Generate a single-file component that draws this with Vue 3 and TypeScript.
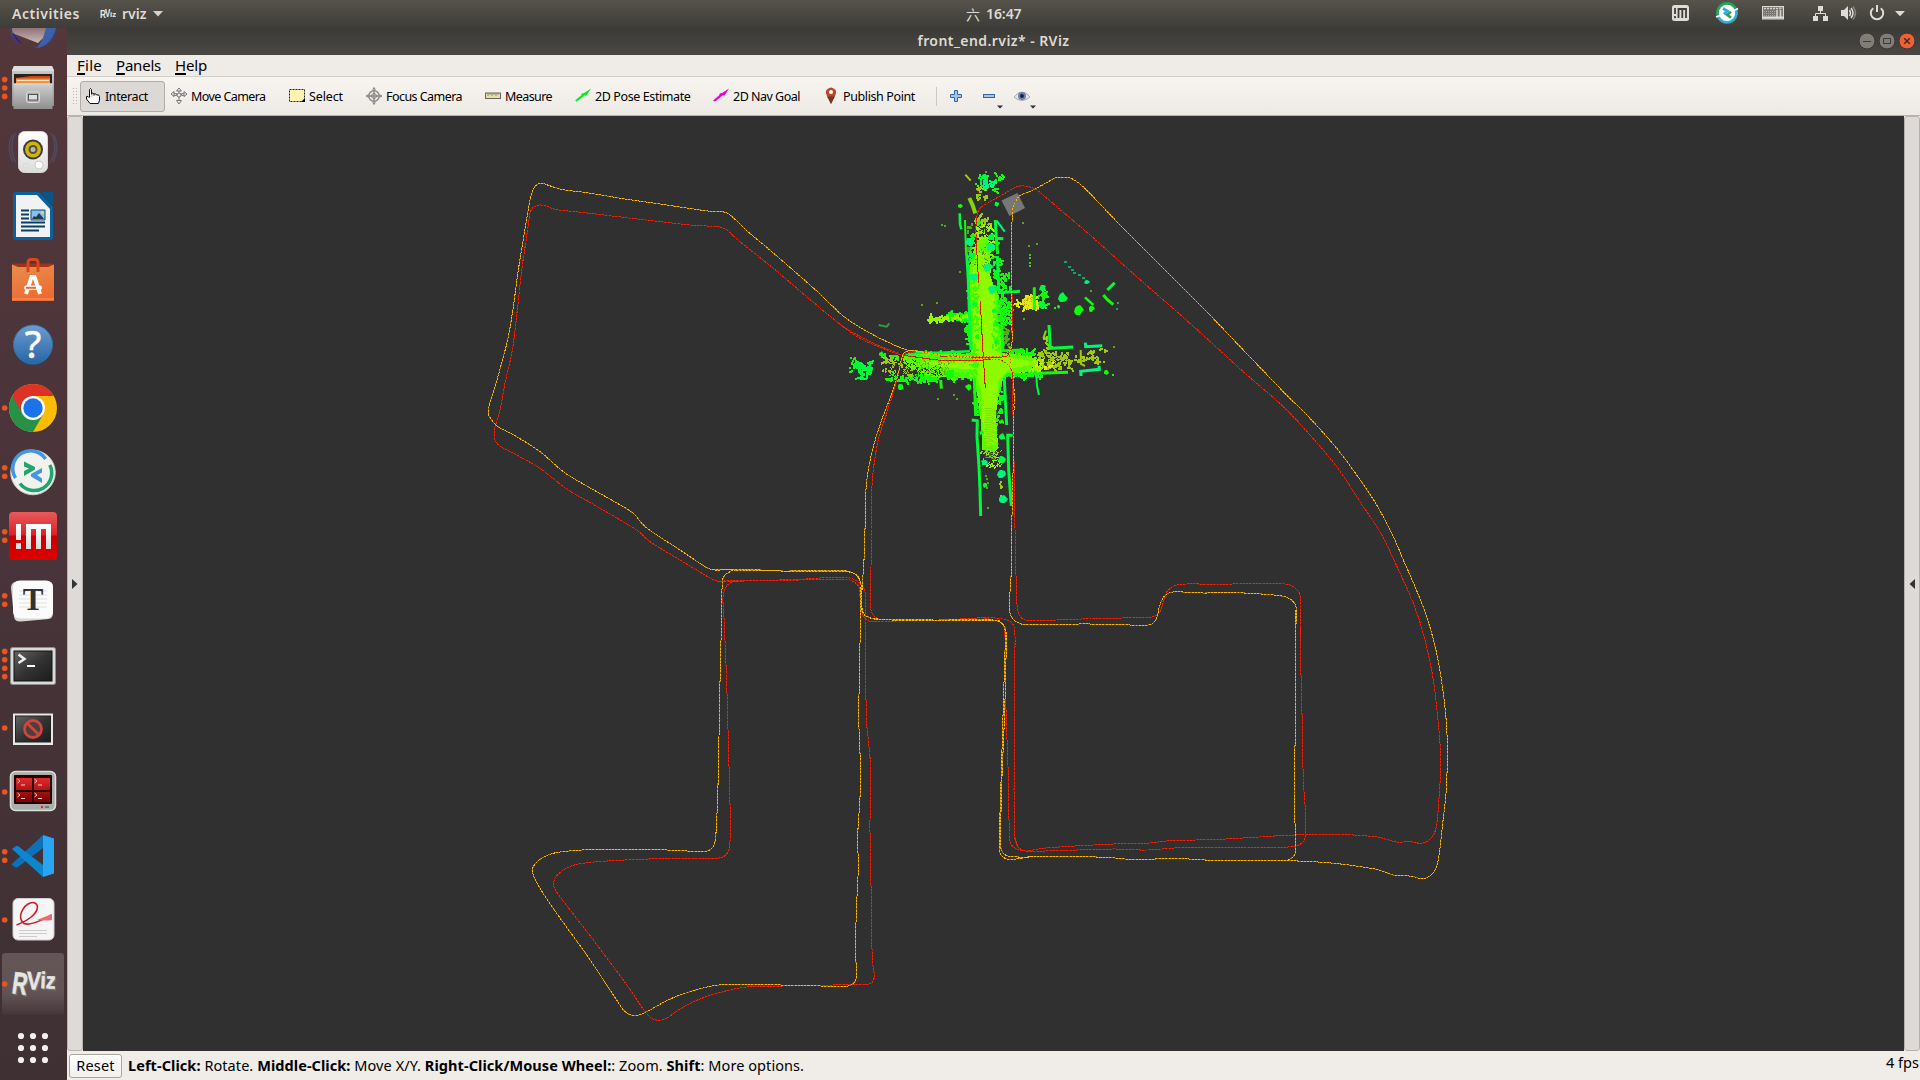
<script setup lang="ts">
import type { Directive } from 'vue'

/* Spreads a label over a fixed advance width. */
const vFit: Directive<HTMLElement, number> = {
  mounted(el, binding) {
    const natural = el.getBoundingClientRect().width
    const count = (el.textContent ?? '').length
    if (count > 0) el.style.letterSpacing = `${(binding.value - natural) / count}px`
  },
}

type Pt = [number, number]

interface Tool {
  id: string
  label: string
  slot: number
  text: number
}

const tools: Tool[] = [
  { id: 'interact', label: 'Interact', slot: 85, text: 43 },
  { id: 'move', label: 'Move Camera', slot: 118, text: 74.5 },
  { id: 'select', label: 'Select', slot: 77, text: 34 },
  { id: 'focus', label: 'Focus Camera', slot: 119, text: 76 },
  { id: 'measure', label: 'Measure', slot: 90, text: 47 },
  { id: 'pose', label: '2D Pose Estimate', slot: 138, text: 95.5 },
  { id: 'nav', label: '2D Nav Goal', slot: 110, text: 67 },
  { id: 'publish', label: 'Publish Point', slot: 114, text: 72 },
]

const menus = [
  { label: 'File', width: 25, slot: 39 },
  { label: 'Panels', width: 45, slot: 59 },
  { label: 'Help', width: 32, slot: 40 },
]

const apps = [
  { id: 'files', windows: 3 },
  { id: 'music', windows: 0 },
  { id: 'writer', windows: 0 },
  { id: 'software', windows: 0 },
  { id: 'help', windows: 0 },
  { id: 'chrome', windows: 1 },
  { id: 'remote', windows: 2 },
  { id: 'nomachine', windows: 2 },
  { id: 'typora', windows: 2 },
  { id: 'terminal', windows: 4 },
  { id: 'blocked', windows: 1 },
  { id: 'terminator', windows: 1 },
  { id: 'code', windows: 2 },
  { id: 'pdf', windows: 1 },
  { id: 'rviz', windows: 1 },
  { id: 'grid', windows: 0 },
]

function parse(ox: number, oy: number, s: string): Pt[] {
  return s.trim().split(/\s+/).map((p) => {
    const [x, y] = p.split(',').map(Number)
    return [ox + x / 3, oy + y / 3] as Pt
  })
}

function smooth(p: Pt[]): string {
  let d = `M${p[0][0].toFixed(1)} ${p[0][1].toFixed(1)}`
  for (let i = 0; i < p.length - 1; i++) {
    const a = p[Math.max(0, i - 1)]
    const b = p[i]
    const c = p[i + 1]
    const e = p[Math.min(p.length - 1, i + 2)]
    const len = Math.hypot(c[0] - b[0], c[1] - b[1])
    const limit = (dx: number, dy: number): Pt => {
      const m = Math.hypot(dx, dy) || 1
      const k = Math.min(m / 6, len / 3) / m
      return [dx * k, dy * k]
    }
    const t1 = limit(c[0] - a[0], c[1] - a[1])
    const t2 = limit(e[0] - b[0], e[1] - b[1])
    d += `C${(b[0] + t1[0]).toFixed(1)} ${(b[1] + t1[1]).toFixed(1)} ${(c[0] - t2[0]).toFixed(1)} ${(c[1] - t2[1]).toFixed(1)} ${c[0].toFixed(1)} ${c[1].toFixed(1)}`
  }
  return d
}

const redTracks = [
  parse(480, 170, '1255,550 1190,524 1120,488 1080,463 980,380 880,295 780,215 740,180 715,170 640,166 480,148 330,130 230,119 200,109 180,105 160,112 150,130 140,200 125,300 112,420 97,540 75,640 60,720 43,780 45,810 60,828 110,855 180,895 260,957 340,1003 470,1080 510,1115 600,1170 690,1224 715,1234 770,1233'),
  parse(840, 160, '0,493 60,535 120,562 175,582 220,590 320,602 480,600 505,615 518,640 518,720 522,900 525,1108'),
  parse(840, 160, '300,590 440,592 500,588 515,560 517,480 516,400'),
  parse(840, 160, '230,575 200,580 185,600 165,680 140,760 115,840 100,930 95,1000 95,1108'),
  parse(500, 550, '1115,-60 1113,50 1111,100 1113,180 1122,198 1140,208 1300,211 1400,206 1470,203 1520,210 1540,225 1545,260 1543,500 1543,850 1555,893'),
  parse(980, 560, '103,830 112,858 135,873 180,866 250,860 400,852 500,850 570,842 720,838 900,827 1000,823 1080,823 1190,831 1250,846 1290,845 1325,850 1350,838 1368,805 1378,700 1382,600 1376,500 1360,360 1335,240 1300,130 1242,0'),
  parse(990, 160, '1212,1200 1170,1115 1120,1040 1040,920 960,825 880,740 760,635 600,490 440,350 300,225 200,140 140,90 110,79 80,80 40,103 0,125 -30,145 -40,170 -42,220 -38,300 -34,368'),
  parse(840, 160, '421,422 428,560 436,685'),
  parse(990, 160, '75,1108 80,1320 86,1360 105,1380 200,1380 300,1376 440,1373 490,1370 510,1355 522,1320 535,1290 570,1273 700,1273 780,1270 880,1271 910,1280 930,1305 932,1440'),
  parse(980, 560, '962,200 962,300 967,500 970,660 977,770 975,835 965,850 940,860 820,863 620,862 500,870 400,867 150,874 110,867 92,850 88,820 85,650 78,450 74,210 60,186 0,172'),
  parse(500, 550, '650,94 700,92 850,91 1040,88 1065,98 1078,115 1083,180 1100,210 1140,216 1200,212'),
  parse(500, 550, '700,94 900,88 980,83 1045,83 1080,100 1095,125 1097,200 1099,500 1111,640 1110,850 1114,1050 1117,1230 1123,1275 1118,1295 1100,1304 1000,1305 850,1308 740,1311 680,1322 600,1347 540,1377 500,1405 478,1411 455,1405 430,1378 370,1290 280,1170 180,1040 162,1010 165,985 190,960 230,943 320,933 480,926 650,925 675,917 688,895 691,820 687,650 680,400 672,200 669,140 680,108 700,94'),
].map(smooth)

const orangeTracks = [
  parse(480, 170, '25,735 25,715 45,650 62,590 85,500 100,410 115,300 133,190 150,90 160,58 172,43 188,40 205,46 250,59 320,68 430,86 560,105 690,124 725,125 745,131 765,148 800,182 860,232 950,310 1020,372 1080,430 1120,460 1190,500 1258,532'),
  parse(840, 160, '176,562 205,571 235,573 260,577 300,585 350,588 480,588 500,580 511,570 516,550 515,400 515,230 518,150 525,128 540,107 575,92 620,68 645,54 665,51 690,54 715,68 740,90'),
  parse(990, 160, '290,90 400,205 520,325 640,445 760,570 880,695 960,775 1040,865 1100,945 1160,1035 1210,1130 1240,1200'),
  parse(980, 560, '1270,0 1305,80 1340,170 1370,280 1390,400 1400,500 1402,600 1398,700 1388,790 1378,880 1368,925 1350,948 1325,956 1300,950 1270,946 1240,945 1215,936 1190,928 1100,914 1000,905 900,902 700,901 600,896 450,898 380,892 170,889 100,898 75,895 60,878 58,830 62,700 68,500 74,300 76,220 70,195 50,182 0,180'),
  parse(980, 560, '160,891 90,890 70,880 62,860 62,800 66,650 74,450 79,230 74,200 55,182'),
  parse(500, 550, '1500,215 1480,210 1300,210 1150,208 1110,203 1090,190 1084,170 1088,90 1094,0'),
  parse(500, 550, '1500,212 1300,212 1130,208 1095,196 1086,175 1083,105 1070,75 1040,65 850,63 700,60 640,60'),
  parse(480, 170, '25,735 50,767 110,800 180,845 250,905 320,948 400,993 460,1030 490,1065 530,1095 600,1140 680,1193 705,1200 800,1198 900,1203 1090,1202 1125,1212 1144,1240'),
  parse(500, 550, '1083,110 1078,400 1076,500 1081,640 1080,740 1073,860 1075,950 1070,1060 1066,1200 1069,1285 1045,1308 900,1306 700,1303 640,1307 560,1328 500,1352 435,1388 405,1397 375,1385 350,1350 260,1215 170,1090 120,1015 98,970 100,950 120,928 160,910 230,901 330,898 450,898 560,903 620,903 640,890 647,860 653,740 657,560 661,350 665,200 667,95 675,75 700,60'),
  parse(840, 160, '350,592 280,582 240,575 205,573 188,585 175,640 150,715 125,780 100,860 85,930 77,1000 75,1108 74,1170'),
  parse(840, 160, '350,592 430,596 480,600 505,615 520,640 522,750 520,900 515,1108'),
  parse(840, 160, '508,560 511,612'),
  parse(990, 160, '65,1108 64,1230 58,1330 60,1360 72,1380 100,1393 300,1392 460,1396 485,1392 500,1375 508,1340 522,1310 550,1296 640,1299 740,1298 870,1307 900,1317 918,1340 916,1440'),
  parse(980, 560, '948,150 946,500 943,700 947,870 940,890 920,902'),
].map(smooth)

/* ---- point cloud ---- */
let seed = 9241
function rnd(): number {
  seed = (seed * 1664525 + 1013904223) >>> 0
  return seed / 4294967296
}
type Layer = Record<string, string>
const under: Layer = {}
const over: Layer = {}
function dot(layer: Layer, color: string, x: number, y: number, w = 2, h = w): void {
  layer[color] = (layer[color] ?? '') + `M${Math.round(840 + x / 3)} ${Math.round(160 + y / 3)}h${w}v${h}h-${w}z`
}
/* Scatters n short clumps inside a box. */
function scatter(layer: Layer, color: string, x1: number, y1: number, x2: number, y2: number, n: number, size = 2, steps = 3): void {
  for (let i = 0; i < n; i++) {
    let x = x1 + (x2 - x1) * rnd()
    let y = y1 + (y2 - y1) * rnd()
    const dx = (rnd() - 0.5) * 9
    const dy = (rnd() - 0.5) * 9
    for (let k = 0; k < steps; k++) {
      dot(layer, color, x, y, size)
      x += dx
      y += dy
    }
  }
}
const LIME = '#96f800'
const GREEN = '#12fa0a'
const SPRING = '#00fb3c'
const TEAL = '#00f57a'
const OLIVE = '#9ccb10'
const YELLOW = '#e2e80a'
const DARK = '#55a914'
const GAP = '#303030'

/* north arm */
scatter(under, GREEN, 382, 220, 400, 560, 80)
scatter(under, GREEN, 455, 230, 478, 400, 34)
scatter(under, GREEN, 465, 400, 488, 560, 60)
scatter(under, OLIVE, 405, 160, 445, 240, 36)
scatter(under, LIME, 405, 195, 455, 270, 40)
scatter(under, DARK, 372, 185, 392, 280, 14)
scatter(under, GREEN, 478, 340, 508, 392, 20)
scatter(under, GREEN, 485, 420, 508, 488, 26)
scatter(under, DARK, 488, 495, 506, 560, 18)
scatter(under, GREEN, 372, 480, 392, 520, 12)
/* top tip */
scatter(under, SPRING, 415, 40, 440, 60, 12)
scatter(under, TEAL, 425, 60, 460, 80, 18)
scatter(under, GREEN, 455, 42, 488, 58, 8)
scatter(under, OLIVE, 405, 75, 440, 120, 14)
scatter(under, GREEN, 462, 82, 476, 96, 3)
/* west arm */
scatter(under, GREEN, 190, 578, 400, 600, 110)
scatter(under, GREEN, 230, 600, 400, 655, 170)
scatter(under, GREEN, 165, 648, 285, 662, 40)
scatter(under, OLIVE, 118, 590, 240, 640, 46)
scatter(under, GREEN, 120, 578, 175, 595, 8)
scatter(under, GREEN, 130, 640, 175, 655, 8)
scatter(under, GREEN, 318, 456, 392, 478, 66)
scatter(under, LIME, 262, 468, 320, 480, 22)
scatter(under, LIME, 310, 464, 390, 474, 20)
scatter(under, SPRING, 38, 608, 88, 622, 18)
scatter(under, SPRING, 54, 620, 84, 655, 20)
scatter(under, GREEN, 32, 592, 60, 640, 8)
/* east arm */
scatter(under, GREEN, 510, 570, 590, 590, 40)
scatter(under, LIME, 515, 585, 600, 632, 90)
scatter(under, OLIVE, 590, 575, 690, 622, 82)
scatter(under, YELLOW, 560, 600, 640, 632, 20)
scatter(under, OLIVE, 700, 588, 780, 608, 18)
scatter(under, OLIVE, 740, 565, 795, 575, 6)
scatter(under, GREEN, 495, 632, 600, 650, 46)
scatter(under, YELLOW, 550, 410, 586, 444, 70)
scatter(under, YELLOW, 528, 424, 555, 434, 8)
scatter(under, GREEN, 588, 398, 618, 444, 18)
scatter(under, OLIVE, 614, 520, 628, 575, 9)
/* south arm */
scatter(under, GREEN, 404, 655, 425, 765, 34)
scatter(under, GREEN, 468, 655, 486, 790, 26)
scatter(under, LIME, 430, 850, 472, 925, 34, 1, 4)
scatter(under, OLIVE, 425, 850, 472, 900, 16, 1, 4)
scatter(under, DARK, 436, 945, 440, 1000, 5, 2, 1)
scatter(under, OLIVE, 478, 880, 482, 1025, 12, 2, 1)

const outline = (s: string): string => 'M' + parse(840, 160, s).map((q) => q.map((v) => v.toFixed(1)).join(' ')).join('L')

const core = outline('410,240 446,236 452,300 446,330 462,380 476,405 472,470 486,560 486,580 520,582 560,590 596,596 590,612 560,636 500,640 490,655 478,690 468,760 472,830 476,865 460,878 440,866 426,872 424,800 420,760 405,655 380,655 330,650 280,652 240,640 200,618 186,598 200,582 300,580 392,582 394,520 388,400 388,330 396,290') + 'Z'
const lane = outline('410,280 442,276 448,340 466,410 470,500 480,590 560,600 580,614 510,626 476,660 470,740 466,780 470,850 440,862 428,800 424,690 404,630 300,620 240,606 300,598 398,596 402,500 396,420 396,340') + 'Z'

scatter(over, '#3dfc00', 392, 340, 412, 640, 54)
scatter(over, '#3dfc00', 456, 420, 482, 570, 30)
scatter(over, '#3dfc00', 200, 584, 395, 596, 60)
scatter(over, '#3dfc00', 330, 630, 400, 655, 26)
scatter(over, '#84f000', 400, 250, 450, 330, 26)
scatter(over, '#a6ff00', 425, 400, 460, 720, 34, 1)
scatter(over, '#a2e800', 560, 600, 600, 625, 14)
scatter(over, '#5cb510', 235, 605, 325, 645, 44, 1, 3)
scatter(over, GAP, 130, 595, 235, 645, 46, 1, 3)
scatter(over, GAP, 205, 625, 300, 645, 26, 1, 3)
scatter(over, GAP, 590, 580, 690, 620, 34, 1, 2)
scatter(over, GAP, 405, 190, 450, 240, 16, 1, 3)
scatter(over, '#5f8f12', 404, 250, 445, 320, 20, 1, 2)
scatter(over, '#b4ac10', 550, 410, 586, 444, 14, 1, 2)

const strokes = [
  { c: GREEN, w: 2, p: '375,180 378,280' },
  { c: SPRING, w: 3, p: '380,280 385,360 388,450 393,570' },
  { c: SPRING, w: 2.5, p: '359,160 360,192 364,208' },
  { c: SPRING, w: 3, p: '466,180 469,235 490,236' },
  { c: TEAL, w: 2, p: '470,182 494,215' },
  { c: GREEN, w: 3, p: '469,236 473,282' },
  { c: SPRING, w: 3, p: '472,288 477,398 540,394' },
  { c: GREEN, w: 3, p: '483,448 489,572 552,570' },
  { c: SPRING, w: 2.5, p: '198,586 240,578 300,578 390,574' },
  { c: GREEN, w: 3, p: '403,655 407,768' },
  { c: SPRING, w: 3, p: '395,780 412,782 411,830 417,920 420,990 422,1068' },
  { c: SPRING, w: 3, p: '493,655 496,720 500,795' },
  { c: SPRING, w: 3, p: '518,826 503,826 506,930 514,1038' },
  { c: SPRING, w: 3, p: '627,495 631,565 700,561' },
  { c: TEAL, w: 3, p: '736,548 737,560 787,557' },
  { c: TEAL, w: 3, p: '723,648 722,634 778,628 777,618' },
  { c: GREEN, w: 3, p: '505,646 600,640 684,637' },
  { c: SPRING, w: 2, p: '589,645 591,678 597,705' },
  { c: GREEN, w: 3, p: '583,382 583,450' },
  { c: OLIVE, w: 2, p: '376,44 392,62' },
  { c: '#86d310', w: 4, p: '388,114 398,136 406,160' },
  { c: GREEN, w: 2.5, p: '735,412 760,435' },
  { c: SPRING, w: 3, p: '802,390 824,368' },
  { c: GREEN, w: 3, p: '790,405 803,420 820,434' },
  { c: GREEN, w: 3, p: '302,660 304,686' },
  { c: '#22a23a', w: 2, p: '116,495 140,500 148,490' },
  { c: OLIVE, w: 2, p: '722,570 723,612 735,618' },
  { c: OLIVE, w: 2, p: '610,535 618,512' },
].map((s) => ({ color: s.c, width: s.w, d: outline(s.p) }))

const blobs: [string, number, number, number][] = [
  [TEAL, 390, 247, 4.5], [TEAL, 452, 260, 5], [SPRING, 452, 230, 3.5], [SPRING, 397, 285, 3.5],
  [TEAL, 446, 322, 4.5], [TEAL, 400, 350, 4], [TEAL, 457, 390, 4], [SPRING, 404, 433, 3],
  [SPRING, 464, 453, 2.5], [GREEN, 467, 492, 2.5], [SPRING, 487, 830, 3], [SPRING, 424, 818, 2],
  [SPRING, 485, 898, 4], [TEAL, 432, 907, 3], [TEAL, 485, 941, 4.5], [TEAL, 490, 1018, 4],
  [SPRING, 436, 975, 2.5], [SPRING, 470, 133, 2.5], [GREEN, 417, 188, 2.5], [GREEN, 362, 138, 2],
  [SPRING, 609, 385, 3.5], [SPRING, 605, 436, 4], [SPRING, 667, 413, 5], [GREEN, 717, 450, 5],
  [GREEN, 656, 440, 1.8], [GREEN, 755, 447, 3], [TEAL, 741, 366, 2.5], [GREEN, 799, 638, 2.5],
  [GREEN, 182, 682, 3], [GREEN, 385, 682, 3], [GREEN, 125, 582, 2.5], [GREEN, 485, 785, 2.5],
  [GREEN, 410, 530, 2.5], [GREEN, 470, 545, 3], [GREEN, 330, 640, 5], [SPRING, 88, 628, 3.5],
]
/* Angular cluster outline around a centre. */
function clump(x: number, y: number, r: number): string {
  const cx = 840 + x / 3
  const cy = 160 + y / 3
  const pts: string[] = []
  for (let i = 0; i < 9; i++) {
    const a = (i / 9) * Math.PI * 2
    const k = r * (0.7 + rnd() * 0.5)
    pts.push(`${Math.round(cx + Math.cos(a) * k)} ${Math.round(cy + Math.sin(a) * k)}`)
  }
  return 'M' + pts.join('L') + 'Z'
}
const clumps = blobs.map(([color, x, y, r]) => ({ color, d: clump(x, y, r) }))

const strays: [number, number, string][] = [
  [303, 193, DARK], [313, 194, DARK], [356, 334, DARK], [242, 433, DARK], [287, 426, DARK], [547, 187, DARK],
  [565, 254, DARK], [589, 249, DARK], [568, 283, '#46c61a'], [568, 290, '#46c61a'], [568, 306, '#46c61a'], [568, 314, '#46c61a'],
  [549, 474, DARK], [641, 442, GREEN], [751, 391, DARK], [828, 445, '#1fa560'], [830, 425, '#1fa560'],
  [797, 571, OLIVE], [818, 558, DARK], [790, 604, OLIVE], [815, 643, GREEN], [347, 714, DARK], [338, 703, DARK],
  [290, 715, DARK], [441, 1042, DARK], [434, 33, DARK], [404, 70, GREEN], [30, 592, GREEN], [26, 622, GREEN],
]
for (const [x, y, c] of strays) dot(over, c, x, y, 2)
const trail: Pt[] = [[673, 303], [684, 318], [692, 328], [700, 337], [714, 342], [726, 350]]
for (const [x, y] of trail) dot(over, '#11a468', x, y, 3, 2)

/* Ridges left by successive scans. */
const ridges: string[] = []
for (let i = 0; i < 22; i++) {
  const y = 160 + (745 + i * 7) / 3
  const x = 840 + (432 + rnd() * 6) / 3
  ridges.push(`M${x.toFixed(1)} ${y.toFixed(1)}q6 -1 ${(9 + rnd() * 5).toFixed(1)} 3`)
}
const underLayer = Object.entries(under)
const overLayer = Object.entries(over)
</script>

<template>
  <div class="desktop">
    <header class="topbar">
      <div class="top-left">
        <b class="activities" v-fit="68">Activities</b>
        <svg class="rv" width="16" height="12"><g fill="#e8e8e4" font-family="Liberation Sans" font-weight="bold"><text transform="translate(0 10) scale(.75 1)" font-size="11">R</text><text transform="translate(5 9) scale(.8 1)" font-size="10">V</text><text x="10" y="8.500" font-size="8">iz</text></g></svg>
        <b class="app-name" v-fit="24.5">rviz</b>
        <svg class="caret" width="10" height="6"><path d="M0 0H10L5 5.4Z" fill="#d4d2cc" /></svg>
      </div>
      <div class="clock"><span class="day">六</span><b v-fit="35.5">16:47</b></div>
      <svg class="tray" width="250" height="28" viewBox="1670 0 250 28">
        <rect x="1672" y="5" width="17" height="16" rx="2.5" fill="#dedcd6" />
        <path d="M1675 8v6M1675 16v2.2M1678.5 18V9H1686V18M1682.3 9V18" stroke="#403e39" stroke-width="1.8" fill="none" />
        <circle cx="1727" cy="13" r="10.9" fill="#22a65a" /><path d="M1716.5 16A11 11 0 0 0 1737.600 10L1735 9 1719 16Z" fill="#38a5e5" /><circle cx="1727" cy="13" r="8.2" fill="#fff" />
        <path d="M1716 17L1720 15.500M1734 10.500L1738 8.500" stroke="#fff" stroke-width="1.5" />
        <path d="M1723 8.500L1727.500 11 1723.800 14" stroke="#38a5e5" stroke-width="2.6" fill="none" /><path d="M1731 11.800L1727 14.800 1731 17.600" stroke="#22a65a" stroke-width="2.6" fill="none" />
        <rect x="1762.500" y="6.500" width="21" height="12.500" fill="#77756f" stroke="#dcdad4" /><path d="M1764 8.500H1782" stroke="#d5d3cd" stroke-width="1.500" stroke-dasharray="2 1" /><path d="M1764 11.500H1775M1764 13.500H1775M1764 15.500H1775" stroke="#aaa8a1" stroke-dasharray="1 1" /><path d="M1777 10V18M1780.500 10V18" stroke="#d5d3cd" stroke-width="1.600" /><path d="M1779 8h4" stroke="#9ad36e" /><path d="M1763 17.500H1783" stroke="#e2e0da" stroke-width="2" />
        <path d="M1818 6h5v5h-5zM1813 16h5v5h-5zM1823 16h5v5h-5z" fill="#dedcd6" /><path d="M1820.500 10V13.500M1815.500 16V13.500H1825.500V16" stroke="#dedcd6" fill="none" />
        <path d="M1841 10h3l4-4v14l-4-4h-3z" fill="#dedcd6" /><path d="M1849.500 10q2 3 0 6M1851 8q4 5 0 10" stroke="#dedcd6" stroke-width="1.500" fill="none" /><path d="M1853 6.500q5 6.500 0 13" stroke="#85837d" stroke-width="1.500" fill="none" />
        <path d="M1873.200 8.200A6.200 6.200 0 1 0 1880.800 8.200" stroke="#dedcd6" stroke-width="2" fill="none" /><path d="M1877 5V12" stroke="#dedcd6" stroke-width="2" />
        <path d="M1895 11h10l-5 5.300z" fill="#dedcd6" />
      </svg>
    </header>

    <div class="body">
      <nav class="launcher">
        <div class="peek">
          <svg width="67" height="28">
            <defs><linearGradient id="bird" y2="1" x2="0"><stop stop-color="#8f7474" /><stop offset="1" stop-color="#ccb9b7" /></linearGradient></defs>
            <path d="M10 0C11 10 16 15 20 16L15 5ZM43 0L42 15 33 20C48 21 56 10 56.500 0Z" fill="#34438f" /><path d="M44 0L42 12 37 20C46 19 53 11 56 0Z" fill="#3c62a5" />
            <path d="M12 0L12 5 38 15 43 10 46 0Z" fill="url(#bird)" /><path d="M12 2C13 9 18 15 22 16L14 6Z" fill="#3b2263" />
          </svg>
        </div>
        <div v-for="app in apps" :key="app.id" class="slot">
          <div v-if="app.id === 'rviz'" class="active" />
          <svg width="67" height="64" viewBox="0 0 67 64">
            <defs>
              <linearGradient id="steel" x2="0" y2="1"><stop stop-color="#cfcfcf" /><stop offset="1" stop-color="#8f8f8f" /></linearGradient>
              <linearGradient id="bag" x2=".3" y2="1"><stop stop-color="#e78e50" /><stop offset="1" stop-color="#ef6c30" /></linearGradient>
              <linearGradient id="blue" x2="0" y2="1"><stop stop-color="#6c9bd3" /><stop offset="1" stop-color="#2766a5" /></linearGradient>
              <linearGradient id="red" x2="0" y2="1"><stop stop-color="#e9595c" /><stop offset=".48" stop-color="#d92326" /><stop offset=".5" stop-color="#c90000" /><stop offset="1" stop-color="#dd0000" /></linearGradient>
              <linearGradient id="white" x2="0" y2="1"><stop stop-color="#fff" /><stop offset="1" stop-color="#dcdcdc" /></linearGradient>
              <linearGradient id="shell" x2="1" y2="1"><stop stop-color="#646464" /><stop offset=".5" stop-color="#333" /><stop offset="1" stop-color="#1b1b1b" /></linearGradient>
              <linearGradient id="crimson" x2="0" y2="1"><stop stop-color="#e02a2a" /><stop offset="1" stop-color="#7b0000" /></linearGradient>
            </defs>
            <g v-if="app.id === 'files'">
              <path d="M14 10H52L54 14V50H12V14Z" fill="url(#steel)" /><path d="M14 10H52L54 15H12Z" fill="#dedede" /><path d="M14 18H52V28H14Z" fill="#2b211c" /><path d="M16 22L31 20H50V28H16Z" fill="#c64a1c" /><path d="M16 22.500H50V28H16Z" fill="#f4913d" /><path d="M17 24.500H49" stroke="#ffe4ba" />
              <path d="M13.500 27.500H52.500V53H13.500Z" fill="url(#steel)" /><path d="M13.500 28H52.500" stroke="#ddd" /><rect x="26.500" y="36" width="13" height="10.500" rx="2" fill="#aaa" stroke="#ddd" /><rect x="28.500" y="38.500" width="9" height="5.500" fill="#ddd" stroke="#555" />
            </g>
            <g v-else-if="app.id === 'music'">
              <path d="M15 13Q8 27 16 43M51 13Q59 27 50 43M12 15Q6 28 13 42M54 15Q60 28 53 42" stroke="#4e4a60" stroke-width="1.500" fill="none" /><rect x="18.500" y="11.500" width="29" height="41" rx="6" fill="url(#white)" stroke="#d6d6d2" /><circle cx="33" cy="29.500" r="10" fill="#3a3a3a" /><circle cx="33" cy="29.500" r="8" fill="#d2b307" /><circle cx="33" cy="29.500" r="4.500" fill="#54503b" /><circle cx="33" cy="29.500" r="2.500" fill="#b8b9a8" /><circle cx="39" cy="45" r="4" fill="#fff" stroke="#ccc" /><rect x="23.500" y="43.500" width="4" height="4" fill="none" stroke="#ddd" />
            </g>
            <g v-else-if="app.id === 'writer'">
              <path d="M16 8H39L53 23V53Q53 56 50 56H16Q13 56 13 53V11Q13 8 16 8Z" fill="#0b619d" /><path d="M41 8H53V20.500Q50 20.500 48 18Z" fill="#0a5488" /><path d="M16 11H37L50 25V53H16Z" fill="#f2f2f2" /><path d="M21 26.500H29M21 30.500H29M21 34.500H29M21 38.500H45M21 42.500H45M21 46.500H39" stroke="#083f64" stroke-width="2" /><path d="M31 26H45V36H31Z" fill="#8abdf0" stroke="#0d4e7b" /><path d="M32 35L34 32 36 33 39 29 44 35Z" fill="#243c45" /><circle cx="42.500" cy="28.500" r="1.600" fill="#f1d744" />
            </g>
            <g v-else-if="app.id === 'software'">
              <path d="M12 16L15 15.500H51L54 16 51 20H15Z" fill="#9d3517" /><path d="M12 16.500L18 19H48L54 16.500V53H12Z" fill="url(#bag)" /><path d="M28 24V15Q28 11.500 31 11.500H35Q38 11.500 38 15V24" stroke="#db471b" stroke-width="3" fill="none" />
              <path d="M26 46L31.500 29H34.500L40 46" stroke="#fff" stroke-width="4" fill="none" /><rect x="24" y="37.500" width="18" height="4.500" rx="2.200" fill="#fff" /><path d="M26 39.800H36" stroke="#e86c2b" stroke-width="2" /><path d="M12 51H54" stroke="#f09a6b" />
            </g>
            <g v-else-if="app.id === 'help'"><circle cx="33" cy="34" r="19.700" fill="#26435f" /><circle cx="33" cy="32.500" r="19.500" fill="url(#blue)" stroke="#3471aa" /><text x="33" y="46" text-anchor="middle" font-family="Noto Sans" font-size="38" fill="#fff" stroke="#fff" stroke-width=".6">?</text></g>
            <g v-else-if="app.id === 'chrome'"><circle cx="33" cy="32" r="24" fill="#fbbc05" /><path d="M33 32L12.200 20A24 24 0 0 0 33 56L43.400 38Z" fill="#279247" /><path d="M33 20H53.800A24 24 0 0 0 12.200 20L22.600 38Z" fill="#dd3226" /><circle cx="33" cy="32" r="12" fill="#fff" /><circle cx="33" cy="32" r="9.700" fill="#1a73e8" /></g>
            <g v-else-if="app.id === 'remote'"><circle cx="33" cy="32.500" r="22.300" fill="#f1f1ed" stroke="#c9c7c4" /><path d="M15.500 38A17.600 17.600 0 0 1 45.500 19" stroke="#4296e3" stroke-width="3.500" fill="none" /><path d="M49.800 25A17.600 17.600 0 0 1 20 43.500" stroke="#1ca66e" stroke-width="3.500" fill="none" /><path d="M24 21.500L35 27V29.500L24 36V31L29 28.500 24 26.500Z" fill="#1ca66e" /><path d="M42 28V32.500L37 35 42 38.500V43L31 36.500V34Z" fill="#4296e3" /></g>
            <g v-else-if="app.id === 'nomachine'"><rect x="9" y="8" width="48" height="48" rx="4" fill="url(#red)" /><path d="M16 20H21V36H16ZM16 39H21V45H16ZM26 20H51V45H46V25H41V45H36V25H31V45H26Z" fill="url(#white)" /></g>
            <g v-else-if="app.id === 'typora'"><path d="M15 14Q16 13 18 13L47 13Q53 13 53 19V45Q53 50 49 51L21 53.500Q15 54 14 49L11 20Q11 15 15 14Z" fill="#d8d8d8" /><rect x="13" y="12.500" width="40" height="38" rx="7" fill="#fbfbfb" /><path d="M19 23H47M19 27H47M19 31H47M19 35H47M19 39H47" stroke="#e1e1e1" /><text x="33" y="42" text-anchor="middle" font-family="Liberation Serif" font-weight="bold" font-size="31" fill="#303335">T</text></g>
            <g v-else-if="app.id === 'terminal'"><rect x="10.500" y="15.500" width="45" height="37" rx="2" fill="#d9d9d9" stroke="#8e8e8e" /><rect x="14" y="19" width="38" height="30" fill="url(#shell)" stroke="#111" /><path d="M18.500 22.500L24.500 27 18.500 31" stroke="#eee" stroke-width="2.500" fill="none" /><path d="M27 34H35" stroke="#fff" stroke-width="2" /></g>
            <g v-else-if="app.id === 'blocked'"><rect x="13" y="17.500" width="40" height="31.500" fill="#e7e7e7" /><rect x="15.500" y="20" width="35" height="26" fill="url(#shell)" stroke="#222" /><circle cx="33" cy="33" r="8.500" fill="#474040" stroke="#d2433b" stroke-width="2.800" /><path d="M27 27L39 39" stroke="#d2433b" stroke-width="2.800" /></g>
            <g v-else-if="app.id === 'terminator'"><rect x="10.500" y="11.500" width="45" height="39" rx="5" fill="#aaafa9" stroke="#dbdedb" stroke-width="1.500" /><rect x="14" y="15" width="38" height="29" rx="1" fill="#280000" /><path d="M16 18H32V30H16ZM34 18H50V30H34ZM16 32H32V42H16ZM34 32H50V42H34Z" fill="url(#crimson)" /><path d="M17.500 19L20 21 17.500 23M21 25H25M34.500 19L37 21 34.500 23M38 25H42M17.500 33L20 35 17.500 37M21 38.500H25M34.500 33L37 35 34.500 37M38 38.500H42" stroke="#f3cccc" fill="none" /><circle cx="42" cy="47" r="1.200" fill="#e22" /><path d="M45 47H49" stroke="#777" stroke-width="2" /></g>
            <g v-else-if="app.id === 'code'"><path d="M12 40L43 11V24L18 43Q16 44 15 43L12 41Z" fill="#0c71ba" /><path d="M12 25L16 22Q17 21.500 18.500 22.500L43 41V53Z" fill="#0e86cf" /><path d="M43 11L54 14.500V49.500L43 53Z" fill="#2aa5f2" /></g>
            <g v-else-if="app.id === 'pdf'"><rect x="13" y="10.500" width="41" height="41.500" rx="5" fill="#f5f5f5" stroke="#cfcfcf" /><path d="M16.500 37C27 33 38 26 37.500 18C35 12 26 14 21.500 24C19 31 22 37 29 36C37 35 44 31 51.500 27" stroke="#cb1e2a" stroke-width="1.600" fill="none" /><path d="M37 32L52 26V32Q44 33 37 32Z" fill="#e56d73" /><path d="M19 42.500H47M19 45.500H47M19 48.500H37" stroke="#ccc" /></g>
            <g v-else-if="app.id === 'rviz'" font-family="Liberation Sans" font-weight="bold">
              <g v-for="layer in 2" :key="layer" :fill="layer === 1 ? '#77716f' : '#e6e6e4'" :stroke="layer === 1 ? '#77716f' : '#e6e6e4'" stroke-width=".5" :transform="layer === 1 ? 'translate(1.300 1.500)' : ''"><text transform="translate(11 41) rotate(8) scale(.68 1)" font-size="31">R</text><text transform="translate(26.500 37) rotate(2) scale(.85 1)" font-size="25">V</text><text transform="translate(40 36) rotate(3) scale(.85 1)" font-size="23">iz</text></g>
            </g>
            <g v-else fill="#f2f1f0"><template v-for="r in 3" :key="r"><circle v-for="c in 3" :key="c" :cx="9 + c * 12" :cy="8 + r * 12" r="3.100" /></template></g>
            <circle v-for="n in app.windows" :key="n" cx="4.700" :cy="32 + (n - (app.windows + 1) / 2) * 8.400" r="2.800" fill="#e95420" />
          </svg>
        </div>
      </nav>

      <main class="window">
        <div class="titlebar">
          <b class="title" v-fit="152">front_end.rviz* - RViz</b>
          <div class="controls">
            <svg width="18" height="18"><circle cx="9" cy="9" r="8" fill="#7f7d76" stroke="#383733" /><path d="M5 9.500H13" stroke="#3c3b37" /></svg>
            <svg width="18" height="18"><circle cx="9" cy="9" r="8" fill="#7f7d76" stroke="#383733" /><path d="M5.500 6.500H12.500V11.500H5.500Z" stroke="#3c3b37" fill="none" /></svg>
            <svg width="18" height="18"><circle cx="9" cy="9" r="8" fill="#ec6136" stroke="#383733" /><path d="M6.200 6.200L11.800 11.800M11.800 6.200L6.200 11.800" stroke="#48281c" stroke-width="1.500" /></svg>
          </div>
        </div>
        <div class="menubar">
          <div v-for="m in menus" :key="m.label" class="menu" :style="{ width: m.slot + 'px' }"><span v-fit="m.width"><u>{{ m.label[0] }}</u>{{ m.label.slice(1) }}</span></div>
        </div>
        <div class="toolbar">
          <div class="grip" />
          <div v-for="t in tools" :key="t.id" class="tool" :class="{ pressed: t.id === 'interact' }" :style="{ width: t.slot + 'px' }">
            <svg width="16" height="18" viewBox="0 0 16 18">
              <path v-if="t.id === 'interact'" d="M4.500 10V2.500Q5.500 .500 6.500 2.500V7.500M6.500 6.500Q8 5.500 9 7V8.500M9 7Q11 6 11.500 8M11.500 8Q14 7 14.500 9.500V13L13.500 16.500H5L1.500 12V9.500Q3 8.500 4.500 11" fill="#fff" stroke="#111" />
              <g v-else-if="t.id === 'move'" fill="#eee" stroke="#777"><path d="M2 6L14 9M14 6L2 9M8 4V14M5 7.500H11" /><path d="M8 1L10.500 4H5.500ZM0 7L3 4.500V9.500ZM16 7L13 4.500V9.500ZM8 17L5.500 13.500H10.500Z" /><circle cx="8" cy="8" r="2" /></g>
              <g v-else-if="t.id === 'select'"><rect x=".5" y="2.500" width="15" height="12" fill="#fff3b4" stroke="#222" stroke-dasharray="2 1" /><path d="M12 15L16 11V15Z" fill="#000" /></g>
              <g v-else-if="t.id === 'focus'" fill="none" stroke="#888"><circle cx="8" cy="9" r="5.200" stroke-width="1.500" /><circle cx="8" cy="9" r="2.500" /><path d="M8 .5V17.500M0 9H16" stroke-width="1.400" /><path d="M6.500 2.500L8 .8 9.500 2.500M6.500 15.500L8 17.200 9.500 15.500M1.800 7.500L.3 9 1.800 10.500M14.200 7.500L15.700 9 14.200 10.500" /></g>
              <g v-else-if="t.id === 'measure'"><rect x=".5" y="6" width="15" height="5.500" fill="#e9dfa5" stroke="#666" /><path d="M3 6V9M5 6V8M7 6V9M9 6V8M11 6V9M13 6V8" stroke="#777" stroke-width=".8" /></g>
              <path v-else-if="t.id === 'pose' || t.id === 'nav'" d="M16 1.500L11.500 8.500 9.500 8.500 2 14.500 0 13.500 6.500 8 6.500 6.500 9 6Z" :fill="t.id === 'pose' ? '#0fea28' : '#f000ce'" />
              <g v-else><path d="M8 17L4 9Q1.500 4 4.500 2Q8 -1 11.500 2Q14.500 4 12 9Z" fill="#bd4729" /><path d="M8 17L4.200 9.500H11.800Z" fill="#6a3b24" /><circle cx="8" cy="5" r="2" fill="#fff" /></g>
            </svg>
            <span v-fit="t.text">{{ t.label }}</span>
          </div>
          <div class="sep" />
          <svg class="extras" width="90" height="30" viewBox="945 81 90 30">
            <path d="M954.500 90.500H957.500V94.500H961.500V97.500H957.500V101.500H954.500V97.500H950.500V94.500H954.500Z" fill="#a6c6e8" stroke="#2f66a8" /><rect x="983.500" y="94.500" width="11" height="3" fill="#a6c6e8" stroke="#2f66a8" />
            <path d="M997 105.500H1003L1000 108.500ZM1030 105.500H1036L1033 108.500Z" fill="#2c2c2c" />
            <path d="M1014 97Q1022 87 1030 97Q1022 104 1014 97Z" fill="#e7e7e3" stroke="#aaa" /><circle cx="1022" cy="96" r="4" fill="#6e7fae" /><circle cx="1022" cy="96" r="1.900" fill="#162152" />
          </svg>
        </div>
        <div class="workspace">
          <div class="handle"><svg width="6" height="10"><path d="M0 0L5.500 5 0 10Z" fill="#333" /></svg></div>
          <svg class="view" width="1821" height="935" viewBox="83 116 1821 935">
            <g shape-rendering="crispEdges"><path v-for="[c, d] in underLayer" :key="c" :d="d" :fill="c" /></g>
            <g shape-rendering="crispEdges"><path :d="core" fill="#5cfb00" /><path :d="lane" fill="#8cfb00" /></g>
            <g shape-rendering="crispEdges"><path v-for="[c, d] in overLayer" :key="c" :d="d" :fill="c" /></g>
            <path :d="ridges.join('')" stroke="#6fd60a" stroke-width=".8" fill="none" />
            <path v-for="(s, i) in strokes" :key="i" :d="s.d" :stroke="s.color" :stroke-width="s.width" fill="none" />
            <path v-for="(b, i) in clumps" :key="'b' + i" :d="b.d" :fill="b.color" />
            <path d="M1001.500 200.500L1017.500 193 1025 208 1009.500 216Z" fill="#777" />
            <g fill="none" shape-rendering="crispEdges">
              <path v-for="(d, i) in redTracks" :key="'r' + i" :d="d" stroke="#9c1c0c" />
              <path v-for="(d, i) in redTracks" :key="'rd' + i" :d="d" stroke="#ff1e00" stroke-dasharray="2 1.300" />
              <path v-for="(d, i) in orangeTracks" :key="'o' + i" :d="d" stroke="#9c720d" />
              <path v-for="(d, i) in orangeTracks" :key="'od' + i" :d="d" stroke="#ffb400" stroke-dasharray="2 1.300" />
            </g>
          </svg>
          <div class="handle"><svg width="6" height="10"><path d="M6 0L.5 5 6 10Z" fill="#333" /></svg></div>
        </div>
        <footer class="status">
          <button class="reset"><span v-fit="38.500">Reset</span></button>
          <div class="hint"><span v-fit="676"><b>Left-Click:</b> Rotate. <b>Middle-Click:</b> Move X/Y. <b>Right-Click/Mouse Wheel:</b>: Zoom. <b>Shift</b>: More options.</span></div>
          <div class="fps"><span v-fit="33">4 fps</span></div>
        </footer>
      </main>
    </div>
  </div>
</template>

<style>
body { margin: 0; overflow: hidden; }
</style>

<style scoped>
.desktop { width: 1920px; height: 1080px; display: flex; flex-direction: column; overflow: hidden; background: #303030; font: 14px/1 "Noto Sans", "Noto Sans CJK SC", sans-serif; color: #000; white-space: nowrap; }
.desktop * { box-sizing: border-box; }
svg { display: block; flex: none; }
b { font-weight: 600; }
.topbar { height: 28px; flex: none; display: grid; grid-template-columns: 1fr auto 1fr; align-items: center; background: linear-gradient(#56534b, #3d3c37); color: #dfdbd2; }
.top-left { display: flex; align-items: center; padding-left: 12px; }
.rv { margin-left: 20px; }
.app-name { margin-left: 6px; }
.caret { margin-left: 6px; }
.clock { display: flex; align-items: center; gap: 6px; margin-left: 68px; width: 56px; }
.day { font: 14px/1 "Noto Sans CJK SC", sans-serif; }
.tray { justify-self: end; }
.body { flex: 1; display: flex; min-height: 0; }
.launcher { width: 67px; flex: none; background: linear-gradient(#53373a, #49343a 45%, #3e3033); }
.peek { height: 28px; }
.slot { height: 64px; display: grid; }
.slot > * { grid-area: 1 / 1; }
.active { width: 62px; height: 62px; margin: 1px 0 0 2px; border-radius: 3px; background: linear-gradient(#645557, #625456 65%, #463639); }
.window { flex: 1; display: flex; flex-direction: column; min-width: 0; background: #f0ece8; }
.titlebar { height: 27px; flex: none; display: grid; grid-template-columns: 1fr auto 1fr; align-items: center; background: linear-gradient(#3b3a36, #4a4843); color: #dfdbd2; }
.title { grid-column: 2; padding-bottom: 2px; }
.controls { display: flex; gap: 2px; justify-self: end; margin: -1px 4px 0 0; }
.menubar { height: 22px; flex: none; display: flex; align-items: center; padding-left: 10px; border-bottom: 1px solid #d3d0ca; background: #efebe7; font-size: 15px; }
u { text-decoration-thickness: 2px; text-underline-offset: 2px; text-decoration-skip-ink: none; }
.toolbar { height: 39px; flex: none; display: flex; align-items: center; background: linear-gradient(#f8f5f0, #edeae5); border-bottom: 1px solid #b7b3ad; font-size: 12.5px; }
.grip { width: 6px; height: 18px; margin: 0 2px 0 5px; background: radial-gradient(circle, #bab6af 0.7px, transparent 1px) 0 0 / 3px 3px; }
.tool { height: 31px; display: flex; align-items: center; gap: 4px; padding-left: 5px; flex: none; }
.tool span { padding-top: 2px; }
.pressed { border: 1px solid #b1aca7; border-radius: 3px; background: #dcd8d5; padding-left: 4px; margin-right: 1px; }
.sep { width: 1px; height: 19px; background: #ccc8c2; margin-left: 4px; }
.extras { margin-left: 8px; overflow: visible; }
.workspace { flex: 1; display: flex; min-height: 0; }
.handle { width: 16px; display: flex; align-items: center; justify-content: center; border: 1px solid #b8b3af; border-radius: 3px; background: #dedad7; }
.view { background: #303030; }
.status { height: 29px; flex: none; display: flex; align-items: center; font-size: 14.5px; padding: 0 1px 0 2px; }
.status b { font-weight: 700; }
.reset { width: 53px; height: 24px; padding: 0; border: 1px solid #aaa49e; border-radius: 3px; background: linear-gradient(#fff, #f2f0ed); font: inherit; color: #000; }
.hint { margin-left: 6px; }
.fps { margin-left: auto; padding-bottom: 6px; }
</style>
